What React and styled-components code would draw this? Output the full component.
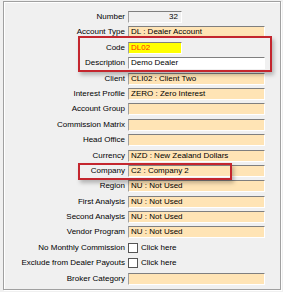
import React from "react";
import styled, { createGlobalStyle } from "styled-components";

const fields = [
  { label: "Number", value: "32", kind: "number" },
  { label: "Account Type", value: "DL : Dealer Account" },
  { label: "Code", value: "DL02", kind: "code" },
  { label: "Description", value: "Demo Dealer", kind: "white" },
  { label: "Client", value: "CLI02 : Client Two" },
  { label: "Interest Profile", value: "ZERO : Zero Interest" },
  { label: "Account Group", value: "" },
  { label: "Commission Matrix", value: "" },
  { label: "Head Office", value: "" },
  { label: "Currency", value: "NZD : New Zealand Dollars" },
  { label: "Company", value: "C2 : Company 2" },
  { label: "Region", value: "NU : Not Used" },
  { label: "First Analysis", value: "NU : Not Used" },
  { label: "Second Analysis", value: "NU : Not Used" },
  { label: "Vendor Program", value: "NU : Not Used" },
  { label: "No Monthly Commission", kind: "check" },
  { label: "Exclude from Dealer Payouts", kind: "check" },
  { label: "Broker Category", value: "" },
];

const GlobalStyle = createGlobalStyle`
  html, body {
    margin: 0;
    padding: 0;
    background: #f0f0f0;
  }
  body {
    font-family: "Liberation Sans", Arial, sans-serif;
    font-size: 8px;
    color: #000;
  }
`;

const Page = styled.div`
  position: relative;
  padding: 1px 0 0 3px;
  width: 283px;
  height: 292px;
  box-sizing: border-box;
`;

const Frame = styled.div`
  width: 278px;
  height: 289px;
  box-sizing: border-box;
  border: 1px solid #a0a0a0;
  box-shadow: inset 1px 1px 0 #fff, 1px 1px 0 #fff;
  padding-top: 9px;
  display: flex;
  flex-direction: column;
  gap: 3.4px;
`;

const Row = styled.div`
  display: grid;
  grid-template-columns: 121px 137px;
  column-gap: 3px;
  height: 12px;
  align-items: center;
`;

const Label = styled.div`
  text-align: right;
  white-space: nowrap;
  line-height: 12px;
`;

const bgFor = (kind) =>
  kind === "code" ? "#ffff00" : kind === "white" ? "#ffffff" : kind === "number" ? "#f0f0f0" : "#ffe4b5";

const Field = styled.div`
  box-sizing: border-box;
  height: 12px;
  width: ${(p) => (p.$kind === "number" || p.$kind === "code" ? "54px" : "137px")};
  background: ${(p) => bgFor(p.$kind)};
  border-top: 1px solid #7f7f7f;
  border-left: 1px solid #a0a0a0;
  border-right: 1px solid #fff;
  border-bottom: 1px solid #fff;
  padding: 0 3px 0 2px;
  line-height: 10px;
  white-space: nowrap;
  overflow: hidden;
  text-align: ${(p) => (p.$kind === "number" ? "right" : "left")};
  color: ${(p) => (p.$kind === "code" ? "#ff2a00" : "#000")};
`;

const CheckWrap = styled.label`
  display: flex;
  align-items: center;
  gap: 3px;
  line-height: 12px;
`;

const Box = styled.span`
  box-sizing: border-box;
  width: 10px;
  height: 10px;
  background: #fff;
  border: 1px solid #555;
`;

const Marker = styled.div`
  position: absolute;
  left: ${(p) => p.$x}px;
  top: ${(p) => p.$y}px;
  width: ${(p) => p.$w}px;
  height: ${(p) => p.$h}px;
  box-sizing: border-box;
  border: 2px solid #c4262e;
  box-shadow: 2px 3px 4px rgba(0, 0, 0, 0.25);
  pointer-events: none;
`;

export default function App() {
  return (
    <Page>
      <GlobalStyle />
      <Frame>
        {fields.map((f) => (
          <Row key={f.label}>
            <Label>{f.label}</Label>
            {f.kind === "check" ? (
              <CheckWrap>
                <Box />
                Click here
              </CheckWrap>
            ) : (
              <Field $kind={f.kind}>{f.value}</Field>
            )}
          </Row>
        ))}
      </Frame>
      <Marker $x={78} $y={36} $w={194} $h={36} />
      <Marker $x={78} $y={163} $w={154} $h={17} />
    </Page>
  );
}
